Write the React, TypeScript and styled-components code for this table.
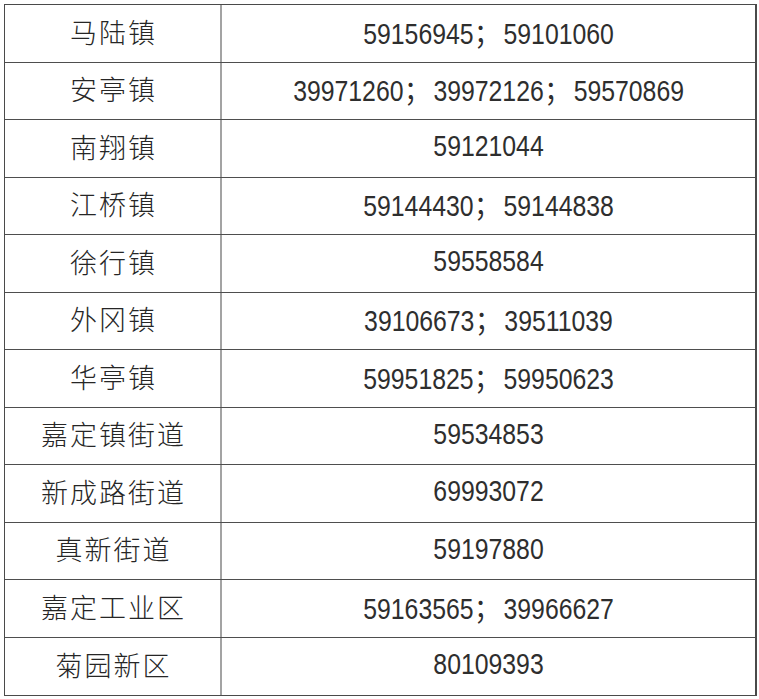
import { FC } from "react"
import { createGlobalStyle, styled } from "styled-components"

type Office = {
  name: string
  phones: string[]
}

const offices: Office[] = [
  { name: "马陆镇", phones: ["59156945", "59101060"] },
  { name: "安亭镇", phones: ["39971260", "39972126", "59570869"] },
  { name: "南翔镇", phones: ["59121044"] },
  { name: "江桥镇", phones: ["59144430", "59144838"] },
  { name: "徐行镇", phones: ["59558584"] },
  { name: "外冈镇", phones: ["39106673", "39511039"] },
  { name: "华亭镇", phones: ["59951825", "59950623"] },
  { name: "嘉定镇街道", phones: ["59534853"] },
  { name: "新成路街道", phones: ["69993072"] },
  { name: "真新街道", phones: ["59197880"] },
  { name: "嘉定工业区", phones: ["59163565", "39966627"] },
  { name: "菊园新区", phones: ["80109393"] },
]

const GlobalStyle = createGlobalStyle`
  html, body {
    margin: 0;
    padding: 0;
    background: #fff;
  }
`

const App: FC = (): JSX.Element => {
  return (
    <>
      <GlobalStyle />
      <PageStyled>
        <TableStyled>
          {offices.map((office, i) => (
            <Row key={office.name} $last={i === offices.length - 1}>
              <NameCell>{office.name}</NameCell>
              <PhoneCell>
                <Numbers>
                  {office.phones.map((phone, j) => (
                    <span key={phone}>
                      {j > 0 && <span className="sep">；</span>}
                      {phone}
                    </span>
                  ))}
                </Numbers>
              </PhoneCell>
            </Row>
          ))}
        </TableStyled>
      </PageStyled>
    </>
  )
}

const PageStyled = styled.div`
  padding: 4px 0 0 4px;
  width: 759px;
  height: 699px;
  box-sizing: border-box;
`

const TableStyled = styled.div`
  width: 753px;
  height: 692px;
  box-sizing: border-box;
  border: 1px solid #4a4a4a;
  border-right-width: 2px;
  display: grid;
  grid-template-rows: repeat(12, 1fr);
`

const Row = styled.div<{ $last: boolean }>`
  display: grid;
  grid-template-columns: 217px 1fr;
  border-bottom: ${(p) => (p.$last ? "none" : "1px solid #4e4e4e")};
`

const NameCell = styled.div`
  display: flex;
  align-items: center;
  justify-content: center;
  padding: 0 0 4px 2px;
  border-right: 2px solid #a3a3a3;
  font-family: "Noto Sans CJK SC", sans-serif;
  font-weight: 300;
  font-size: 27px;
  letter-spacing: 2px;
  color: #262626;
`

const PhoneCell = styled.div`
  display: flex;
  align-items: center;
  justify-content: center;
  padding-bottom: 3px;
  font-family: "Liberation Sans", "Noto Sans CJK SC", sans-serif;
  font-size: 29px;
  color: #2e2e2e;
`

// the reference uses a condensed face; squeeze Liberation Sans to its width
const Numbers = styled.span`
  display: inline-block;
  white-space: nowrap;
  transform: scaleX(0.855);

  span.sep {
    font-family: "Noto Sans CJK SC", sans-serif;
    font-size: 28px;
    display: inline-block;
    margin: 0 5px 0 2px;
    transform: scaleX(1.1);
  }
`

export default App
